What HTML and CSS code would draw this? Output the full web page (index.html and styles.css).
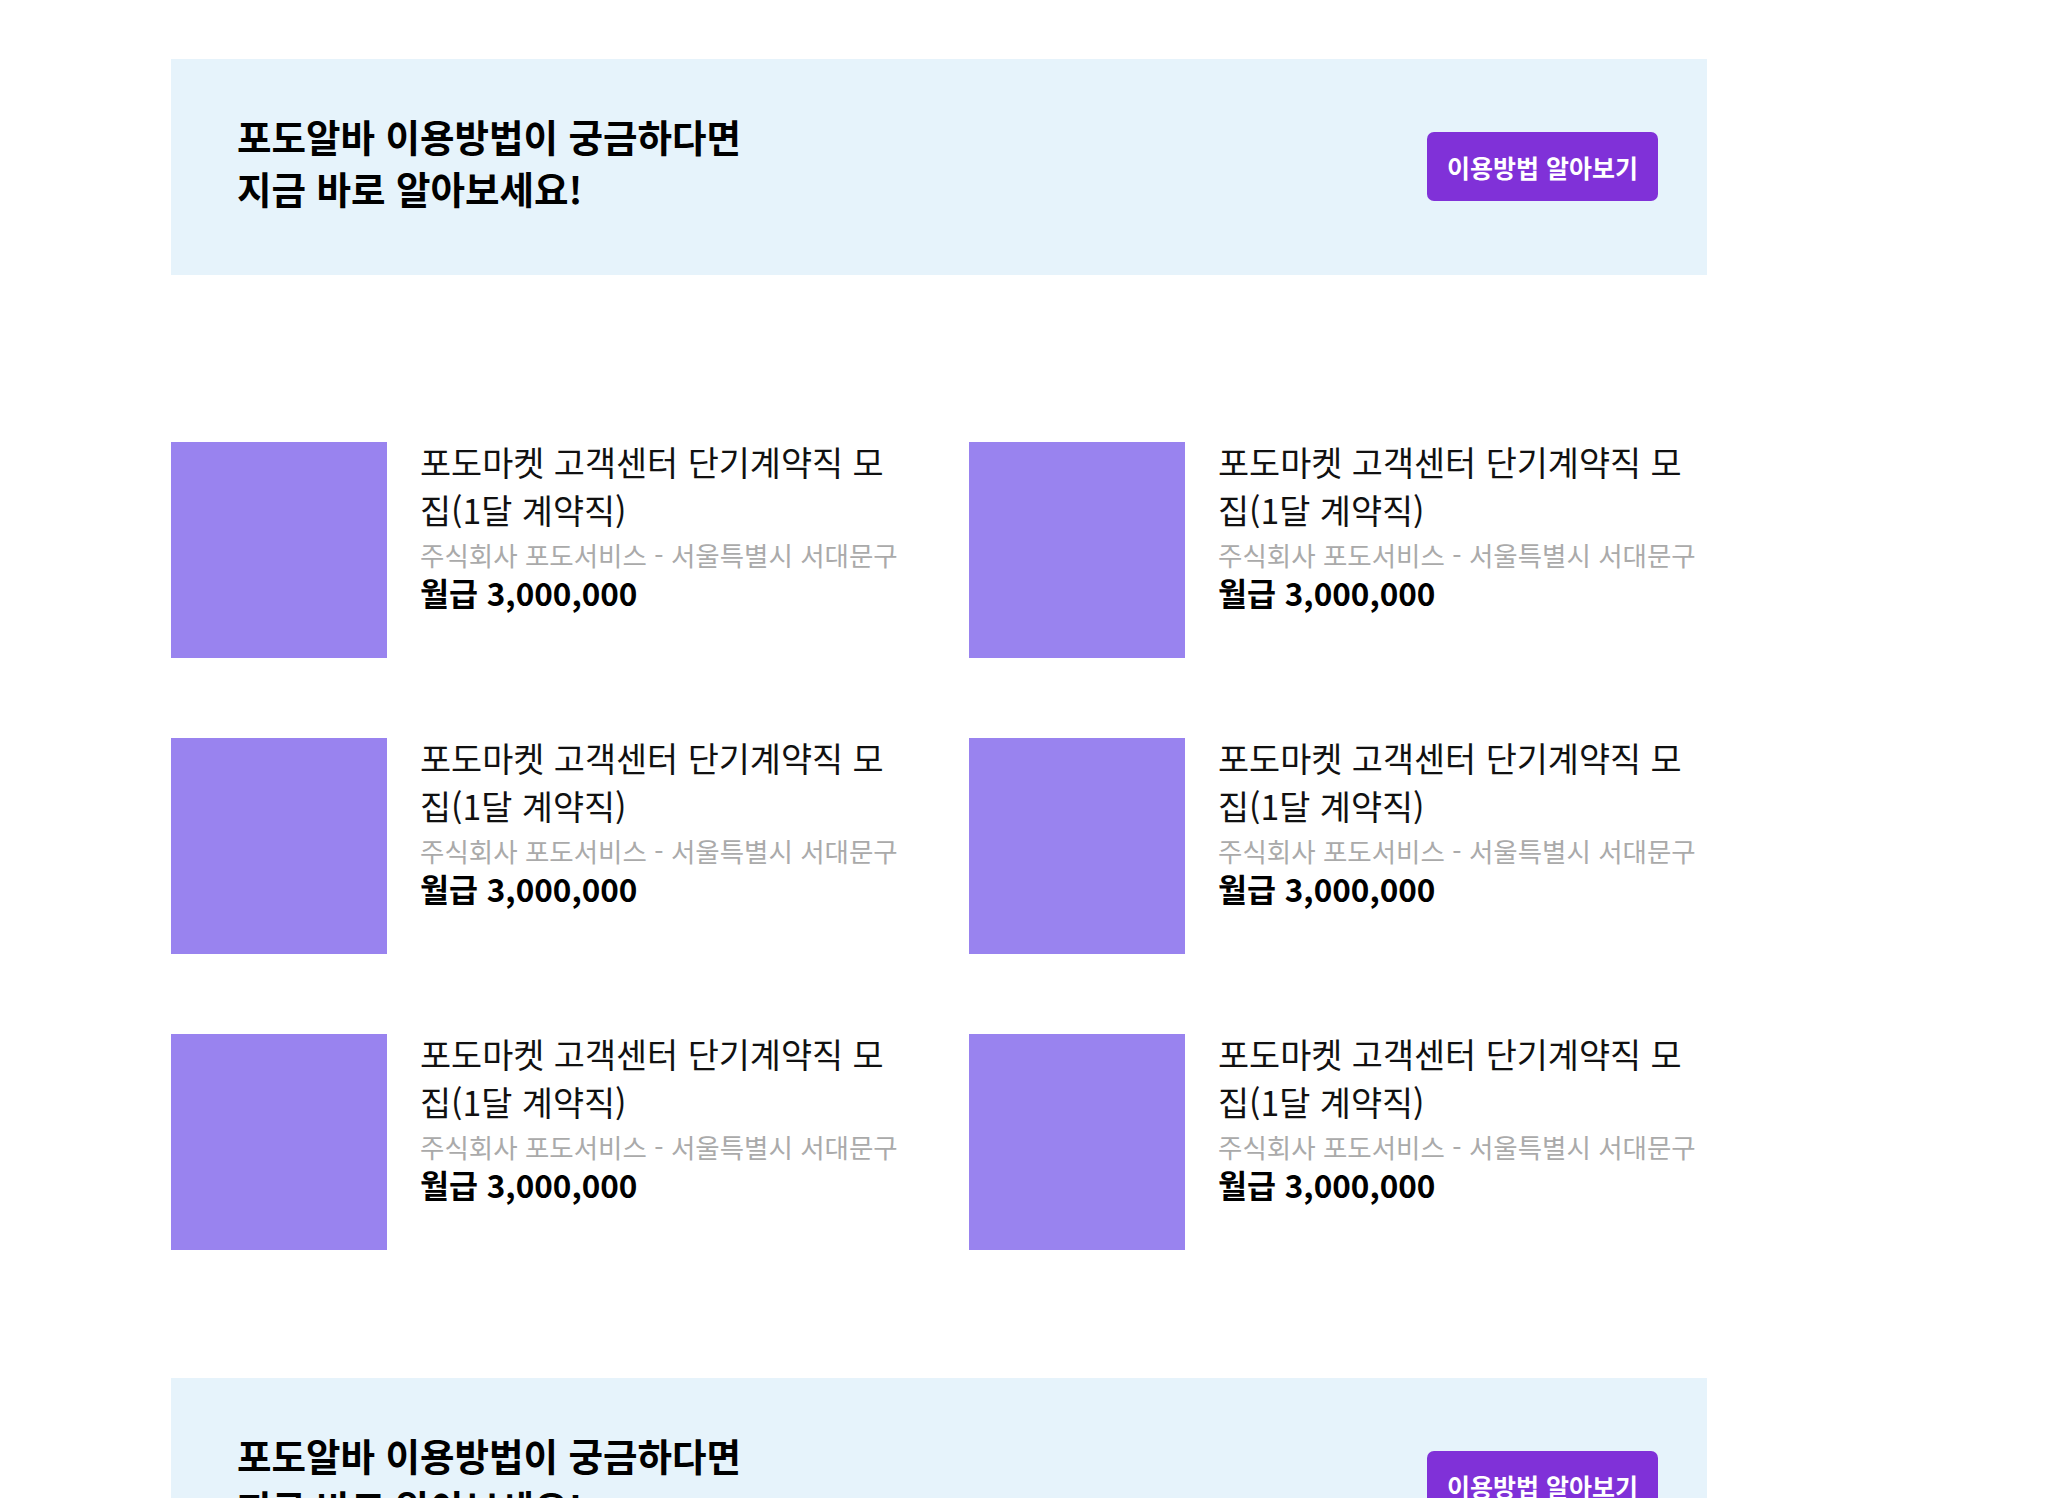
FILE: index.html
```html
<!DOCTYPE html>
<html lang="ko">
<head>
<meta charset="utf-8">
<title>포도알바</title>
<link rel="stylesheet" href="styles.css">
</head>
<body>
<main class="page">
  <section class="banner">
    <h2 class="banner-title">포도알바 이용방법이 궁금하다면<br>지금 바로 알아보세요!</h2>
    <a class="banner-btn" href="#">이용방법 알아보기</a>
  </section>

  <ul class="jobs">
    <li class="job"><div class="thumb"></div><div class="info"><p class="job-title">포도마켓 고객센터 단기계약직 모집(1달 계약직)</p><p class="job-meta">주식회사 포도서비스 - 서울특별시 서대문구</p><p class="job-pay">월급 3,000,000</p></div></li>
    <li class="job"><div class="thumb"></div><div class="info"><p class="job-title">포도마켓 고객센터 단기계약직 모집(1달 계약직)</p><p class="job-meta">주식회사 포도서비스 - 서울특별시 서대문구</p><p class="job-pay">월급 3,000,000</p></div></li>
    <li class="job"><div class="thumb"></div><div class="info"><p class="job-title">포도마켓 고객센터 단기계약직 모집(1달 계약직)</p><p class="job-meta">주식회사 포도서비스 - 서울특별시 서대문구</p><p class="job-pay">월급 3,000,000</p></div></li>
    <li class="job"><div class="thumb"></div><div class="info"><p class="job-title">포도마켓 고객센터 단기계약직 모집(1달 계약직)</p><p class="job-meta">주식회사 포도서비스 - 서울특별시 서대문구</p><p class="job-pay">월급 3,000,000</p></div></li>
    <li class="job"><div class="thumb"></div><div class="info"><p class="job-title">포도마켓 고객센터 단기계약직 모집(1달 계약직)</p><p class="job-meta">주식회사 포도서비스 - 서울특별시 서대문구</p><p class="job-pay">월급 3,000,000</p></div></li>
    <li class="job"><div class="thumb"></div><div class="info"><p class="job-title">포도마켓 고객센터 단기계약직 모집(1달 계약직)</p><p class="job-meta">주식회사 포도서비스 - 서울특별시 서대문구</p><p class="job-pay">월급 3,000,000</p></div></li>
  </ul>

  <section class="banner">
    <h2 class="banner-title">포도알바 이용방법이 궁금하다면<br>지금 바로 알아보세요!</h2>
    <a class="banner-btn" href="#">이용방법 알아보기</a>
  </section>
</main>
</body>
</html>
```

FILE: styles.css
```css
* { box-sizing: border-box; }
html, body { margin: 0; padding: 0; background: #ffffff; }
body {
  font-family: "Noto Sans CJK KR", "Noto Sans", sans-serif;
  color: #111111;
}
.page {
  width: 1536px;
  margin-left: 171px;
  padding-top: 59px;
}
.banner {
  height: 216px;
  background: #e6f3fb;
  display: flex;
  align-items: center;
  justify-content: space-between;
  padding: 0 49px 0 66px;
}
.banner-title {
  margin: 0 0 11px 0;
  font-size: 37.5px;
  font-weight: 700;
  line-height: 52px;
  color: #000000;
}
.banner-btn {
  display: flex;
  align-items: center;
  justify-content: center;
  width: 231px;
  height: 69px;
  margin-bottom: 1px;
  border-radius: 7px;
  background: #8031d8;
  color: #ffffff;
  font-size: 25px;
  font-weight: 700;
  text-decoration: none;
}
.jobs {
  list-style: none;
  margin: 167px 0 128px 0;
  padding: 0;
  display: grid;
  grid-template-columns: 738px 738px;
  column-gap: 60px;
  row-gap: 80px;
}
.job {
  display: flex;
  gap: 33px;
}
.thumb {
  width: 216px;
  height: 216px;
  flex: none;
  background: #9983ef;
}
.info {
  width: 489px;
}
.info p { margin: 0; }
.info .job-title {
  margin-top: -4px;
  font-size: 33.8px;
  line-height: 48px;
  color: #111111;
}
.job-meta {
  font-size: 26.5px;
  line-height: 42px;
  color: #aaaaaa;
}
.job-pay {
  font-size: 31.5px;
  line-height: 32px;
  font-weight: 700;
  color: #000000;
}
```
